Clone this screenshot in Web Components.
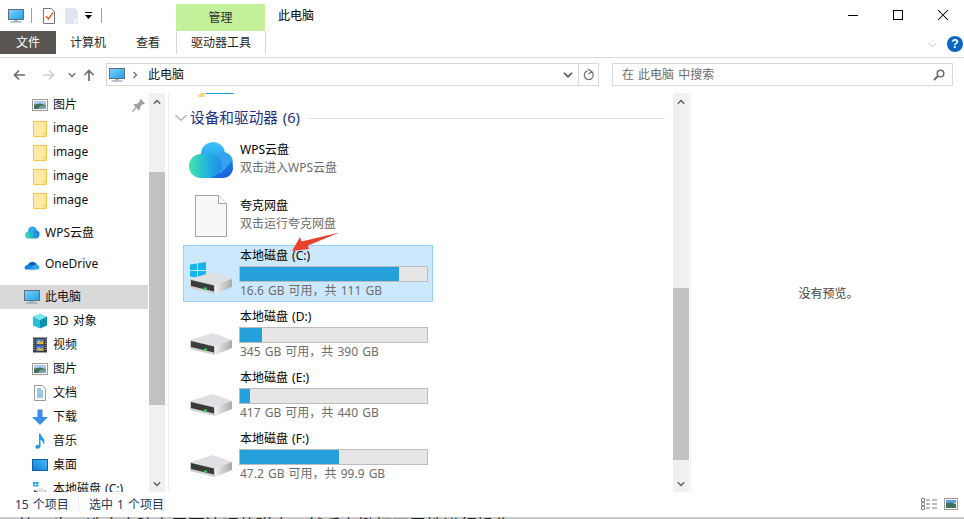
<!DOCTYPE html>
<html lang="zh-CN">
<head>
<meta charset="utf-8">
<title>此电脑</title>
<style>
  html, body { margin: 0; height: 519px; overflow: hidden; background: #fff; }
  body { font: 12px "Noto Sans", "Noto Sans CJK SC", sans-serif; color: #000; word-spacing: 1px; }
</style>
</head>
<body>
<x-explorer>
  <x-titlebar title-text="此电脑" context-tab="管理"></x-titlebar>
  <x-ribbon context-tool="驱动器工具"></x-ribbon>
  <x-address-row place="此电脑" hint="在 此电脑 中搜索"></x-address-row>
  <x-main>
    <x-nav-pane slot="nav">
      <x-nav-item icon="pictures" indent>图片<x-icon slot="end" name="pin" size="16"></x-icon></x-nav-item>
      <x-nav-item icon="folder" indent>image</x-nav-item>
      <x-nav-item icon="folder" indent>image</x-nav-item>
      <x-nav-item icon="folder" indent>image</x-nav-item>
      <x-nav-item icon="folder" indent>image</x-nav-item>
      <x-nav-item icon="wps" spaced>WPS云盘</x-nav-item>
      <x-nav-item icon="onedrive" spaced>OneDrive</x-nav-item>
      <x-nav-item icon="pc" spaced selected>此电脑</x-nav-item>
      <x-nav-item icon="cube" indent>3D 对象</x-nav-item>
      <x-nav-item icon="film" indent>视频</x-nav-item>
      <x-nav-item icon="pictures" indent>图片</x-nav-item>
      <x-nav-item icon="doc" indent>文档</x-nav-item>
      <x-nav-item icon="download" indent>下载</x-nav-item>
      <x-nav-item icon="music" indent>音乐</x-nav-item>
      <x-nav-item icon="desktop" indent>桌面</x-nav-item>
      <x-nav-item icon="drive-small" indent>本地磁盘 (C:)</x-nav-item>
    </x-nav-pane>
    <x-scrollbar slot="nav-bar" before="62" thumb="233"></x-scrollbar>
    <x-content slot="content">
      <x-group-header>设备和驱动器 (6)</x-group-header>
      <x-app-tile icon="wps-large" name="WPS云盘" note="双击进入WPS云盘" style="--after:18px"></x-app-tile>
      <x-app-tile icon="blank-file" name="夸克网盘" note="双击运行夸克网盘" style="--after:12px"></x-app-tile>
      <x-drive-tile icon="drive-win" name="本地磁盘 (C:)" used="85" info="16.6 GB 可用，共 111 GB" selected></x-drive-tile>
      <x-drive-tile icon="drive" name="本地磁盘 (D:)" used="11.5" info="345 GB 可用，共 390 GB"></x-drive-tile>
      <x-drive-tile icon="drive" name="本地磁盘 (E:)" used="5.2" info="417 GB 可用，共 440 GB"></x-drive-tile>
      <x-drive-tile icon="drive" name="本地磁盘 (F:)" used="52.7" info="47.2 GB 可用，共 99.9 GB"></x-drive-tile>
      <x-callout-arrow></x-callout-arrow>
    </x-content>
    <x-scrollbar slot="content-bar" before="178" thumb="172"></x-scrollbar>
    <x-preview slot="preview">没有预览。</x-preview>
  </x-main>
  <x-statusbar count="15 个项目" picked="选中 1 个项目"></x-statusbar>
  <x-page-strip>第一步，选中电脑上需要清理的磁盘，然后右键打开属性进行操作</x-page-strip>
</x-explorer>

<script>
const monitor = `
  <defs><linearGradient id="s" x1="0" y1="0" x2="1" y2="1"><stop offset="0" stop-color="#7fd4fb"/><stop offset="1" stop-color="#1f9fe8"/></linearGradient></defs>
  <rect x="0.5" y="1.5" width="15" height="10" fill="url(#s)" stroke="#5d6f80"/>
  <rect x="6" y="12" width="4" height="1.5" fill="#a8b4bf"/>
  <rect x="2.5" y="13.5" width="11" height="1" fill="#7d92a6"/>`;

const hdd = `
  <defs><linearGradient id="side" x1="0" y1="0" x2="1" y2="0"><stop offset="0" stop-color="#f0f0f0"/><stop offset="1" stop-color="#a9a9a9"/></linearGradient></defs>
  <path d="M1 8 24 1 43 8 26 14Z" fill="#dfe0e3"/>
  <path d="M26 14 43 8V16L26 23Z" fill="url(#side)"/>
  <path d="M1 8 26 14V23L1 17Z" fill="#cfcfcf"/>
  <path d="M2 9 25 14.500V20.500L2 15Z" fill="#3b3b3b"/>
  <rect x="15" y="16.500" width="3" height="2" fill="#35d058"/>`;

const ICONS = {
  pc: { box: "0 0 16 16", body: monitor },
  folder: { box: "0 0 16 16", body: `
    <path d="M1.500 .5H14.500V15.500H1.500Z" fill="#ffe9a3" stroke="#efc545"/>
    <path d="M12 15V12.500H14.500" fill="none" stroke="#efc545"/>` },
  pictures: { box: "0 0 16 16", body: `
    <rect x=".5" y="2.500" width="15" height="11" fill="#fff" stroke="#9b9b9b"/>
    <rect x="2" y="4" width="12" height="3.500" fill="#a9c9ec"/>
    <path d="M2 7.500 8 6.500 14 8V12H2Z" fill="#3f7257"/>
    <path d="M8 9 14 8.500V12H6Z" fill="#7d9db0"/>` },
  pin: { box: "0 0 16 16", body: `
    <path d="M9.500 2 14 6.500 12.800 7.500 11.800 7 9 10 9 12.500 8 13.500 2.500 8 3.500 7 6 7 9 4.200 8.500 3.200Z" fill="#9aa0a6"/>
    <path d="M5 10.500 1.500 14.500" stroke="#9aa0a6" stroke-width="1.300"/>` },
  wps: { box: "0 0 16 16", body: `
    <defs><linearGradient id="w" x1="0" y1="0" x2="1" y2="0"><stop offset="0" stop-color="#3ee0b0"/><stop offset="1" stop-color="#1a7de8"/></linearGradient></defs>
    <circle cx="8.500" cy="6" r="4.500" fill="#2eaaf0"/><circle cx="12" cy="9" r="3.500" fill="#1b78e6"/>
    <rect x="1" y="6.500" width="14" height="7" rx="3.500" fill="url(#w)"/>` },
  "wps-large": { box: "0 0 44 36", body: `
    <defs>
      <linearGradient id="a" x1="0" y1="0" x2="0" y2="1"><stop offset="0" stop-color="#40c4f8"/><stop offset="1" stop-color="#1c8ff0"/></linearGradient>
      <linearGradient id="b" x1="0" y1="0" x2="1" y2="0"><stop offset="0" stop-color="#42e6ac"/><stop offset=".55" stop-color="#24b4dc"/><stop offset="1" stop-color="#1d8cec"/></linearGradient>
      <linearGradient id="c" x1="0" y1="0" x2="1" y2="1"><stop offset="0" stop-color="#2a96f2"/><stop offset="1" stop-color="#1357d8"/></linearGradient>
    </defs>
    <circle cx="24" cy="12" r="12" fill="url(#a)"/>
    <circle cx="34" cy="20" r="10" fill="#33a3f2"/>
    <rect x="0" y="12" width="33" height="24" rx="12" fill="url(#b)"/>
    <path d="M21 36H33C40 36 44 31 44 26 44 23 43 21 42 19 39 26 30 32 21 36Z" fill="url(#c)"/>` },
  onedrive: { box: "0 0 16 16", body: `
    <path d="M4 7.500A5 5 0 0 1 13 7.500L13 11H3Z" fill="#0a5fb8"/>
    <path d="M.5 11.500A3.500 3.500 0 0 1 5 8L9 8.500 11 12.500H1.500Z" fill="#1785dc"/>
    <path d="M6 12.500 9.500 8.500A3.500 3.500 0 0 1 15.500 10.500 2 2 0 0 1 14 12.500Z" fill="#36a5ec"/>` },
  cube: { box: "0 0 16 16", body: `
    <path d="M8 .5 15 3.500 8 7 1 3.500Z" fill="#7fe3ea"/>
    <path d="M1 3.500 8 7V15.500L1 12.500Z" fill="#25c2d6"/>
    <path d="M15 3.500 8 7V15.500L15 12.500Z" fill="#0b90ad"/>` },
  film: { box: "0 0 16 16", body: `
    <rect x="1" y=".5" width="14" height="15" fill="#3a3a3a"/>
    <rect x="4" y="2" width="8" height="5.500" fill="#3f7ad6"/>
    <rect x="4" y="8.500" width="8" height="5.500" fill="#3f7ad6"/>
    <path d="M5 5 7 3 9 5 11 3.500V7H5ZM5 12 7 10 9 12 11 10.500V13.500H5Z" fill="#e3b63f"/>
    <path d="M2 2V14M14 2V14" stroke="#d9d9d9" stroke-dasharray="1 1"/>` },
  doc: { box: "0 0 16 16", body: `
    <path d="M2.500 .5H10.500L13.500 3.500V15.500H2.500Z" fill="#fff" stroke="#9b9b9b"/>
    <path d="M5 4H9M5 6H11M5 8H11M5 10H11M5 12H11" stroke="#3a8fdc"/>` },
  download: { box: "0 0 16 16", body: `
    <path d="M5.500 .5H10.500V8H16L8 16 0 8H5.500Z" fill="#3a8ee6"/>` },
  music: { box: "0 0 16 16", body: `
    <path d="M7 .5H8.500C9 4 12.500 4.500 12.500 9 12.500 10 12 11 11.500 11.500 11.500 8.500 10 7.500 8.500 7V13C8.500 15 6.500 16 5 15.800 3 15.500 2.800 13.500 4 12.500 5 11.700 6 11.700 7 12.200Z" fill="#1b9cf0"/>` },
  desktop: { box: "0 0 16 16", body: `
    <defs><linearGradient id="d" x1="0" y1="1" x2="1" y2="0"><stop offset="0" stop-color="#0f7fd8"/><stop offset="1" stop-color="#45b8f4"/></linearGradient></defs>
    <rect x=".5" y="2.500" width="15" height="11" fill="url(#d)" stroke="#0d5fa8"/>` },
  "drive-small": { box: "0 0 16 16", body: `
    <path d="M1 1H3.500V3H1ZM4 1H6.500V3H4ZM1 3.500H3.500V5.500H1ZM4 3.500H6.500V5.500H4Z" fill="#1ba1e2"/>
    <path d="M2 9 10 7 15 9.500 8 12Z" fill="#dfe0e3"/><path d="M2 9 8 12V15L2 12.500Z" fill="#444"/><path d="M8 12 15 9.500V12L8 15Z" fill="#bbb"/>` },
  "blank-file": { box: "0 0 32 42", body: `
    <path d="M.5 .5H23.500L31.500 8.500V41.500H.5Z" fill="#f7f7f7" stroke="#a4a4a4"/>
    <path d="M23.500 .5V8.500H31.500" fill="#fff" stroke="#a4a4a4"/>` },
  drive: { box: "0 0 44 36", body: `<g transform="translate(0 10)">${hdd}</g>` },
  "drive-win": { box: "0 0 44 36", body: `
    <path d="M1 3.500 8 2.500V9H1ZM9 2.300 17 1V9H9ZM1 10H8V16.500L1 15.500ZM9 10H17V18L9 16.700Z" fill="#16b3ee"/>
    <g transform="translate(0 10)">${hdd}</g>` },
  back: { box: "0 0 12 12", body: `<path d="M6 1.500 1.500 6 6 10.500M1.500 6H12" fill="none" stroke="currentColor" stroke-width="1.700"/>` },
  forward: { box: "0 0 12 12", body: `<path d="M6 1.500 10.500 6 6 10.500M10.500 6H0" fill="none" stroke="currentColor" stroke-width="1.700"/>` },
  up: { box: "0 0 12 12", body: `<path d="M1.500 6 6 1.500 10.500 6M6 1.500V12" fill="none" stroke="currentColor" stroke-width="1.700"/>` },
  "chev-down": { box: "0 0 8 8", body: `<path d="M.8 2.200 4 5.400 7.200 2.200" fill="none" stroke="currentColor" stroke-width="1.400"/>` },
  "chev-thin": { box: "0 0 12 8", body: `<path d="M.5 1 6 6.500 11.500 1" fill="none" stroke="currentColor"/>` },
  "chev-right": { box: "0 0 8 8", body: `<path d="M2.500 1 5.500 4 2.500 7" fill="none" stroke="currentColor" stroke-width="1.300"/>` },
  refresh: { box: "0 0 12 12", body: `<path d="M8.800 2.800A4.500 4.500 0 1 1 4.500 1.800M5 0 8.800 2.800 5.500 5" fill="none" stroke="currentColor" stroke-width="1.200"/>` },
  search: { box: "0 0 12 12", body: `<circle cx="7.500" cy="4.500" r="3.300" fill="none" stroke="currentColor" stroke-width="1.500"/><path d="M5 7 1 11" stroke="currentColor" stroke-width="2"/>` },
  "check-doc": { box: "0 0 12 16", body: `
    <path d="M.5 .5H8.500L11.500 3.500V15.500H.5Z" fill="#fff" stroke="#777"/>
    <path d="M3 8 5.500 11 10 4.500" fill="none" stroke="#e8622a" stroke-width="1.400"/>` },
  "pale-doc": { box: "0 0 13 16", body: `<path d="M0 0H10L13 3V16H0Z" fill="#dfe6f2"/><path d="M10 16V12H13" fill="none" stroke="#fff"/>` },
  "qat-menu": { box: "0 0 7 7", body: `<path d="M0 0H7V1H0ZM0 3H7L3.500 7Z" fill="#000"/>` },
  minimize: { box: "0 0 10 10", body: `<path d="M0 5.500H10" stroke="#000"/>` },
  maximize: { box: "0 0 10 10", body: `<rect x=".5" y=".5" width="9" height="9" fill="none" stroke="#000"/>` },
  close: { box: "0 0 10 10", body: `<path d="M0 0 10 10M10 0 0 10" stroke="#000" stroke-width="1.050"/>` },
  details: { box: "0 0 16 12", body: `
    <path d="M.5 .5H3.500V3.500H.5ZM.5 4.500H3.500V7.500H.5ZM.5 8.500H3.500V11.500H.5Z" fill="#fff" stroke="#8a8a8a"/>
    <path d="M5 2H9M11 2H16M5 6H9M11 6H16M5 10H9M11 10H16" stroke="#777"/>` },
  "large-view": { box: "0 0 14 12", body: `
    <rect x=".5" y=".5" width="13" height="11" fill="#fff" stroke="#9b9b9b"/>
    <rect x="2" y="2" width="10" height="3" fill="#5c9ee6"/><path d="M2 5 7 4.500 12 6V10H2Z" fill="#3f7257"/>` },
  arrow: { box: "0 0 48 20", body: `<path d="M0 19 8 5 9.500 9.500 47.500 .5 16 13.500 17 17Z" fill="#e8412c"/>` },
};

class Base extends HTMLElement {
  constructor() {
    super();
    this.attachShadow({ mode: "open" });
  }
  connectedCallback() {
    this.shadowRoot.innerHTML = `<style>${this.renderStyle()}</style>${this.renderHtml()}`;
  }
  renderStyle() { return ":host { display: block; }"; }
  renderHtml() { return "<slot></slot>"; }
}

class XIcon extends Base {
  renderStyle() {
    return `:host { display: inline-flex; flex: none; } svg { display: block; overflow: visible; }`;
  }
  renderHtml() {
    const icon = ICONS[this.getAttribute("name")];
    const [, , w, h] = icon.box.split(" ").map(Number);
    const width = this.getAttribute("size") || w;
    const height = this.getAttribute("size") ? width * h / w : h;
    return `<svg viewBox="${icon.box}" width="${width}" height="${height}">${icon.body}</svg>`;
  }
}

class XExplorer extends Base {
  renderStyle() {
    return `:host { display: flex; flex-direction: column; width: 964px; height: 519px; overflow: hidden; }`;
  }
}

class XTitlebar extends Base {
  renderStyle() {
    return /* css */ `
      :host { display: flex; height: 31px; align-items: center; flex: none; }
      .sep { width: 1px; height: 15px; background: #9f9f9f; }
      .tab {
        align-self: flex-end; width: 89px; height: 27px; margin-left: 74px;
        background: #c4f09c; color: #2f2f2f; text-align: center; line-height: 28px;
      }
      .title { margin: 0 0 2px 13px; }
      .grow { flex: 1; }
      .btn { width: 45px; height: 30px; display: flex; align-items: center; justify-content: center; }
      .btn x-icon { margin-bottom: 2px; }
      .btn:last-child { margin-right: -1px; }
    `;
  }
  renderHtml() {
    return `
      <x-icon name="pc" size="16" style="margin-left:8px"></x-icon>
      <span class="sep" style="margin-left:7px"></span>
      <x-icon name="check-doc" style="margin-left:11px"></x-icon>
      <x-icon name="pale-doc" style="margin-left:10px"></x-icon>
      <x-icon name="qat-menu" style="margin-left:7px"></x-icon>
      <span class="sep" style="margin-left:9px"></span>
      <span class="tab">${this.getAttribute("context-tab")}</span>
      <span class="title">${this.getAttribute("title-text")}</span>
      <span class="grow"></span>
      <span class="btn"><x-icon name="minimize"></x-icon></span>
      <span class="btn"><x-icon name="maximize"></x-icon></span>
      <span class="btn"><x-icon name="close"></x-icon></span>
    `;
  }
}

class XRibbon extends Base {
  renderStyle() {
    return /* css */ `
      :host {
        display: flex; height: 23px; padding-bottom: 3px; flex: none;
        border-bottom: 1px solid #d9d9d9; color: #262626; align-items: stretch;
      }
      .tab { display: flex; align-items: center; justify-content: center; padding-bottom: 1px; box-sizing: border-box; }
      .file { width: 56px; background: #595551; color: #fff; }
      .tool {
        width: 90px; margin-bottom: -3px; height: 23px;
        border-left: 1px solid #d8d8d8; border-right: 1px solid #d8d8d8;
      }
      .grow { flex: 1; }
      .chev { color: #a9a9a9; align-self: center; margin-top: 4px; }
      .help {
        width: 16px; height: 16px; margin: 5px 1px 0 10px; border-radius: 50%;
        background: #0a66c2; color: #fff; font: bold 12px/16px "Liberation Sans", sans-serif; text-align: center;
      }
    `;
  }
  renderHtml() {
    return `
      <span class="tab file">文件</span>
      <span class="tab" style="width:64px">计算机</span>
      <span class="tab" style="width:56px">查看</span>
      <span class="tab tool">${this.getAttribute("context-tool")}</span>
      <span class="grow"></span>
      <x-icon class="chev" name="chev-thin" size="9"></x-icon>
      <span class="help">?</span>
    `;
  }
}

class XAddressRow extends Base {
  renderStyle() {
    return /* css */ `
      :host { display: flex; height: 23px; padding: 5px 11px 7px 0; flex: none; align-items: stretch; }
      .nav { width: 106px; display: flex; align-items: center; flex: none; color: #6d6d6d; }
      .box { border: 1px solid #d9d9d9; box-sizing: border-box; display: flex; align-items: center; }
      .path { width: 493px; flex: none; }
      .path .text { margin: 0 0 2px 9px; color: #111; }
      .grow { flex: 1; }
      .drop { color: #555; margin-right: 5px; }
      .div { width: 1px; align-self: stretch; background: #d9d9d9; }
      .refresh { color: #6d6d6d; margin: 0 3px 0 4px; }
      .search { flex: 1; margin-left: 13px; padding-left: 9px; color: #6d6d6d; }
      .search .hint { margin-bottom: 2px; }
      .glass { color: #6b6b6b; margin-right: 7px; }
    `;
  }
  renderHtml() {
    return `
      <div class="nav">
        <x-icon name="back" style="margin-left:13px"></x-icon>
        <x-icon name="forward" style="margin-left:18px;color:#cfcfcf"></x-icon>
        <x-icon name="chev-down" style="margin-left:13px"></x-icon>
        <x-icon name="up" style="margin-left:7px"></x-icon>
      </div>
      <div class="box path">
        <x-icon name="pc" size="16" style="margin-left:2px"></x-icon>
        <x-icon name="chev-right" style="margin-left:6px;color:#6d6d6d"></x-icon>
        <span class="text">${this.getAttribute("place")}</span>
        <span class="grow"></span>
        <x-icon class="drop" name="chev-down" size="10"></x-icon>
        <span class="div"></span>
        <x-icon class="refresh" name="refresh"></x-icon>
      </div>
      <div class="box search">
        <span class="hint">${this.getAttribute("hint")}</span>
        <span class="grow"></span>
        <x-icon class="glass" name="search"></x-icon>
      </div>
    `;
  }
}

class XMain extends Base {
  renderStyle() {
    return `:host { display: grid; grid-template-columns: 149px 16px 508px 16px 1fr; height: 399px; flex: none; }`;
  }
  renderHtml() {
    return ["nav", "nav-bar", "content", "content-bar", "preview"].map((n) => `<slot name="${n}"></slot>`).join("");
  }
}

class XNavPane extends Base {
  renderStyle() {
    return `:host { display: block; height: 399px; overflow: hidden; padding-right: 1px; box-sizing: border-box; }`;
  }
}

class XNavItem extends Base {
  renderStyle() {
    return /* css */ `
      :host { display: flex; align-items: center; height: 24px; padding-left: 24px; color: #111; }
      :host([indent]) { padding-left: 32px; }
      :host([spaced]) { margin-top: 8px; }
      :host([selected]) { background: #d9d9d9; }
      .label { margin-left: 5px; flex: 1; white-space: nowrap; margin-top: -3px; }
      ::slotted(x-icon) { margin-right: 1px; }
    `;
  }
  renderHtml() {
    return `<x-icon name="${this.getAttribute("icon")}" size="16"></x-icon>
      <span class="label"><slot></slot></span><slot name="end"></slot>`;
  }
}

class XScrollbar extends Base {
  renderStyle() {
    return /* css */ `
      :host { display: flex; flex-direction: column; background: #f0f0f0; color: #606060; }
      .end { height: 17px; flex: none; display: flex; align-items: center; justify-content: center; }
      .up { transform: rotate(180deg); }
      .thumb { background: #c2c2c2; flex: none; }
      .rest { flex: 1; }
    `;
  }
  renderHtml() {
    return `
      <div class="end"><x-icon class="up" name="chev-down"></x-icon></div>
      <div style="height:${this.getAttribute("before")}px;flex:none"></div>
      <div class="thumb" style="height:${this.getAttribute("thumb")}px"></div>
      <div class="rest"></div>
      <div class="end"><x-icon name="chev-down"></x-icon></div>
    `;
  }
}

class XContent extends Base {
  renderStyle() {
    return /* css */ `
      :host { display: block; position: relative; overflow: hidden; height: 399px; }
      .edge { position: absolute; left: 3px; top: 0; bottom: 0; width: 1px; background: #f0f0f0; }
      .stub { display: flex; height: 5px; margin-left: 33px; margin-bottom: 10px; }
      .stub i { display: block; width: 7px; height: 4px; background: linear-gradient(135deg, #fff 20%, #f5d98c 20%); }
      .stub b { display: block; width: 28px; height: 1px; margin-left: 1px; background: #26a0da; }
    `;
  }
  renderHtml() {
    return `<div class="edge"></div><div class="stub"><i></i><b></b></div><slot></slot>`;
  }
}

class XGroupHeader extends Base {
  renderStyle() {
    return /* css */ `
      :host { display: flex; align-items: center; height: 20px; margin: 0 8px 11px 10px; color: #1e3287; font-size: 14.67px; }
      x-icon { color: #7a7a7a; margin-right: 3px; }
      .line { flex: 1; height: 1px; background: #e2e2e2; margin-left: 8px; }
      span { white-space: nowrap; margin-bottom: 3px; }
    `;
  }
  renderHtml() {
    return `<x-icon name="chev-thin"></x-icon><span><slot></slot></span><div class="line"></div>`;
  }
}

class XAppTile extends Base {
  renderStyle() {
    return /* css */ `
      :host { display: flex; height: 38px; width: 250px; margin: 0 0 var(--after, 4px) 18px; padding-top: 1px; box-sizing: border-box; line-height: 18px; }
      .cell { width: 56px; flex: none; display: flex; align-items: center; justify-content: center; }
      .cell x-icon { margin-top: 2px; }
      .note { color: #6d6d6d; }
      .text { padding: 1px 0 0 1px; white-space: nowrap; }
    `;
  }
  renderHtml() {
    return `
      <div class="cell"><x-icon name="${this.getAttribute("icon")}"></x-icon></div>
      <div class="text"><div>${this.getAttribute("name")}</div><div class="note">${this.getAttribute("note")}</div></div>
    `;
  }
}

class XDriveTile extends Base {
  renderStyle() {
    return /* css */ `
      :host { display: flex; height: 57px; width: 250px; margin: 0 0 4px 18px; box-sizing: border-box; border: 1px solid transparent; }
      :host([selected]) { background: #cce8ff; border-color: #99d1ff; }
      .cell { width: 55px; flex: none; padding: 15px 0 0 5px; box-sizing: border-box; }
      .body { flex: 1; min-width: 0; padding-right: 4px; }
      .name { line-height: 18px; padding: 1px 0 0 1px; }
      .bar { height: 16px; margin-top: 1px; box-sizing: border-box; border: 1px solid #bcbcbc; background: #e6e6e6; }
      .fill { height: 100%; background: #26a0da; }
      .info { line-height: 17px; color: #6d6d6d; padding-left: 1px; white-space: nowrap; }
    `;
  }
  renderHtml() {
    return `
      <div class="cell"><x-icon name="${this.getAttribute("icon")}"></x-icon></div>
      <div class="body">
        <div class="name">${this.getAttribute("name")}</div>
        <div class="bar"><div class="fill" style="width:${this.getAttribute("used")}%"></div></div>
        <div class="info">${this.getAttribute("info")}</div>
      </div>
    `;
  }
}

class XCalloutArrow extends Base {
  renderStyle() {
    return `:host { position: absolute; left: 127px; top: 139px; line-height: 0; }`;
  }
  renderHtml() {
    return `<x-icon name="arrow"></x-icon>`;
  }
}

class XPreview extends Base {
  renderStyle() {
    return /* css */ `
      :host { display: flex; align-items: center; justify-content: center; color: #444; border-left: 1px solid #f0f0f0; margin-left: 1px; padding-left: 2px; height: 399px; box-sizing: border-box; }
    `;
  }
}

class XStatusbar extends Base {
  renderStyle() {
    return /* css */ `
      :host { display: flex; align-items: center; height: 23px; flex: none; color: #1e395b; }
      .sep { width: 1px; height: 15px; background: #ececec; }
      .grow { flex: 1; }
    `;
  }
  renderHtml() {
    return `
      <span style="margin-left:15px;width:63px;white-space:nowrap">${this.getAttribute("count")}</span>
      <span class="sep"></span>
      <span style="margin-left:10px;width:75px;white-space:nowrap">${this.getAttribute("picked")}</span>
      <span class="sep"></span>
      <span class="grow"></span>
      <x-icon name="details" style="margin-right:7px"></x-icon>
      <x-icon name="large-view" style="margin-right:6px"></x-icon>
    `;
  }
}

class XPageStrip extends Base {
  renderStyle() {
    return /* css */ `
      :host { display: block; height: 4px; overflow: hidden; flex: none; background: linear-gradient(#fff 2px, #c9c9c9 2px); }
      div { font-size: 17px; line-height: 24px; margin-top: -1px; padding-left: 18px; color: #222; white-space: nowrap; }
    `;
  }
  renderHtml() {
    return `<div><slot></slot></div>`;
  }
}

const elements = {
  "x-icon": XIcon, "x-explorer": XExplorer, "x-titlebar": XTitlebar, "x-ribbon": XRibbon,
  "x-address-row": XAddressRow, "x-main": XMain, "x-nav-pane": XNavPane, "x-nav-item": XNavItem,
  "x-scrollbar": XScrollbar, "x-content": XContent, "x-group-header": XGroupHeader,
  "x-app-tile": XAppTile, "x-drive-tile": XDriveTile, "x-callout-arrow": XCalloutArrow,
  "x-preview": XPreview, "x-statusbar": XStatusbar, "x-page-strip": XPageStrip,
};
Object.entries(elements).forEach(([tag, cls]) => customElements.define(tag, cls));
</script>
</body>
</html>
